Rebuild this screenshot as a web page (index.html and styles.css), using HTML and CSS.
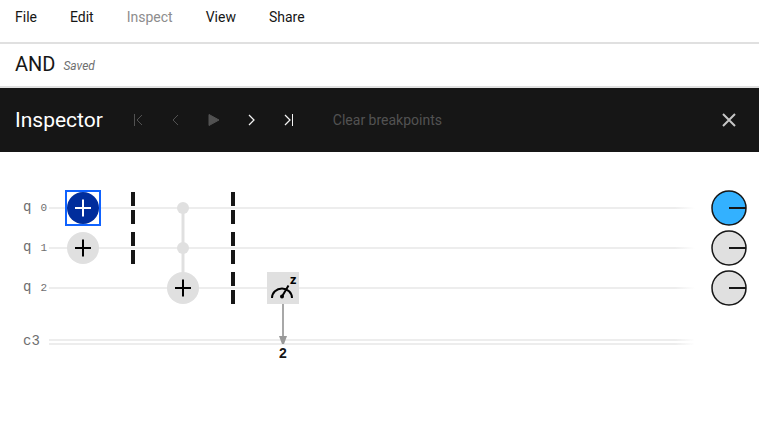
FILE: index.html
```html
<!DOCTYPE html>
<html lang="en">
<head>
<meta charset="utf-8">
<title>AND</title>
<link rel="stylesheet" href="styles.css">
</head>
<body>
<nav class="menu">
  <button>File</button>
  <button>Edit</button>
  <button disabled>Inspect</button>
  <button>View</button>
  <button>Share</button>
</nav>
<header class="title-bar">
  <h1>AND</h1>
  <em>Saved</em>
</header>
<section class="inspector">
  <h2>Inspector</h2>
  <div class="steps">
    <button disabled aria-label="First step"><svg viewBox="0 0 16 16"><path d="M4.500 2v12M12 3L7 8l5 5"/></svg></button>
    <button disabled aria-label="Previous step"><svg viewBox="0 0 16 16"><path d="M10 3L5 8l5 5"/></svg></button>
    <button disabled aria-label="Play"><svg viewBox="0 0 16 16"><path class="solid" d="M3 2.500v11l10-5.500z"/></svg></button>
    <button aria-label="Next step"><svg viewBox="0 0 16 16"><path class="bold" d="M5 3l5 5-5 5"/></svg></button>
    <button aria-label="Last step"><svg viewBox="0 0 16 16"><path class="bold" d="M3 3l5 5-5 5"/><path d="M10.500 2v12"/></svg></button>
  </div>
  <button class="clear" disabled>Clear breakpoints</button>
  <button class="close" aria-label="Close"><svg viewBox="0 0 20 20"><path d="M4 4l12 12M16 4L4 16"/></svg></button>
</section>
<main class="circuit">
  <div class="row">
    <span class="label">q <small>0</small></span>
    <span class="wire"></span>
    <svg class="dial on" viewBox="0 0 36 36"><circle cx="18" cy="18" r="17"/><path d="M18 18h17"/></svg>
  </div>
  <div class="row">
    <span class="label">q <small>1</small></span>
    <span class="wire"></span>
    <svg class="dial" viewBox="0 0 36 36"><circle cx="18" cy="18" r="17"/><path d="M18 18h17"/></svg>
  </div>
  <div class="row">
    <span class="label">q <small>2</small></span>
    <span class="wire"></span>
    <svg class="dial" viewBox="0 0 36 36"><circle cx="18" cy="18" r="17"/><path d="M18 18h17"/></svg>
  </div>
  <div class="row classical">
    <span class="label">c3</span>
    <span class="wire double"></span>
  </div>
  <svg class="gates" viewBox="0 0 320 180" width="320" height="180">
    <g>
      <rect x="66" y="3" width="34" height="34" fill="#fff" stroke="#0f62fe" stroke-width="2"/>
      <circle cx="83" cy="20" r="16" fill="#002d9c"/>
      <path d="M75 20h16M83 11.500v17" stroke="#fff" stroke-width="2"/>
    </g>
    <g>
      <circle cx="83" cy="60" r="16" fill="#e0e0e0"/>
      <path d="M75 60h16M83 51.500v17" stroke="#000" stroke-width="2"/>
    </g>
    <path d="M133 4v14M133 22v14M133 44v14M133 62v14" stroke="#161616" stroke-width="4"/>
    <g>
      <path d="M183 20v80" stroke="#e0e0e0" stroke-width="3"/>
      <circle cx="183" cy="20" r="6" fill="#e0e0e0"/>
      <circle cx="183" cy="60" r="6" fill="#e0e0e0"/>
      <circle cx="183" cy="100" r="16" fill="#e0e0e0"/>
      <path d="M175 100h16M183 91.500v17" stroke="#000" stroke-width="2"/>
    </g>
    <path d="M233 4v14M233 22v14M233 44v14M233 62v14M233 84v14M233 102v14" stroke="#161616" stroke-width="4"/>
    <g>
      <rect x="267" y="84" width="32" height="32" fill="#e0e0e0"/>
      <path d="M272 110a10 9.500 0 0 1 20 0M282 108.500L288.500 97.500" fill="none" stroke="#000" stroke-width="2"/>
      <circle cx="282" cy="108.500" r="2" fill="#000"/>
      <text class="basis" x="290" y="96">z</text>
      <path d="M283 116v34" stroke="#a8a8a8" stroke-width="2"/>
      <path d="M279 148h8l-3 8h-2z" fill="#999"/>
      <text class="bit" x="283" y="170">2</text>
    </g>
  </svg>
</main>
</body>
</html>
```
FILE: styles.css
```css
* { box-sizing: border-box; }
body {
  margin: 0;
  background: #fff;
  color: #161616;
  font: 14px/20px Roboto, "Liberation Sans", sans-serif;
}
button {
  padding: 0;
  border: 0;
  background: none;
  color: inherit;
  font: inherit;
}
h1, h2 { margin: 0; font-size: 20px; line-height: 28px; font-weight: 400; }
h2 { font-size: 21px; }
.menu {
  display: flex;
  gap: 33px;
  height: 44px;
  padding: 0 15px 8px;
  border-bottom: 2px solid #e0e0e0;
}
.menu button:disabled { color: #8d8d8d; }
.title-bar {
  display: flex;
  align-items: center;
  gap: 8px;
  height: 44px;
  padding: 0 15px 2px;
  border-bottom: 2px solid #e0e0e0;
}
.title-bar em { padding-top: 4px; color: #6f6f6f; font-size: 12px; }
.inspector {
  display: flex;
  align-items: center;
  height: 64px;
  padding: 0 20px 0 15px;
  background: #161616;
  color: #fff;
}
.steps { display: flex; gap: 22px; margin-left: 27px; }
.steps button { width: 16px; height: 16px; }
.steps svg { display: block; width: 16px; height: 16px; }
.inspector path { fill: none; stroke: #f4f4f4; stroke-width: 1; }
.steps .bold { stroke-width: 1.25; }
.steps button:disabled path { stroke: #525252; }
.steps button:disabled .solid { fill: #525252; }
.clear { margin-left: 35px; }
.clear:disabled { color: #525252; }
.close { width: 20px; height: 20px; margin-left: auto; }
.close svg { display: block; width: 20px; height: 20px; }
.inspector .close path { stroke: #c6c6c6; stroke-width: 2; }
.circuit { position: relative; padding: 36px 12px 36px 23px; }
.row { display: flex; align-items: center; height: 40px; }
.label {
  display: flex;
  flex: none;
  align-items: baseline;
  gap: 9px;
  width: 26px;
  padding-bottom: 2px;
  color: #6f6f6f;
  font: 14px/20px "Liberation Mono", monospace;
  white-space: nowrap;
}
.label small { padding-top: 2px; font-size: 11px; }
.wire {
  flex: 1;
  height: 2px;
  margin-right: 16px;
  background: linear-gradient(to right, #ededed calc(100% - 20px), transparent);
}
.dial { flex: none; width: 36px; height: 36px; }
.dial circle { fill: #e0e0e0; stroke: #161616; stroke-width: 1.5; }
.dial path { stroke: #161616; stroke-width: 2; }
.dial.on circle { fill: #33b1ff; }
.classical { margin-top: 14px; }
.double {
  height: 6px;
  margin-right: 52px;
  -webkit-mask: linear-gradient(#000 2px, transparent 2px 4px, #000 4px);
  mask: linear-gradient(#000 2px, transparent 2px 4px, #000 4px);
}
.gates { position: absolute; top: 36px; left: 0; }
.basis { font: bold 13px "Open Sans", sans-serif; }
.bit { font: bold 14px "Liberation Sans", sans-serif; text-anchor: middle; fill: #161616; }
```
